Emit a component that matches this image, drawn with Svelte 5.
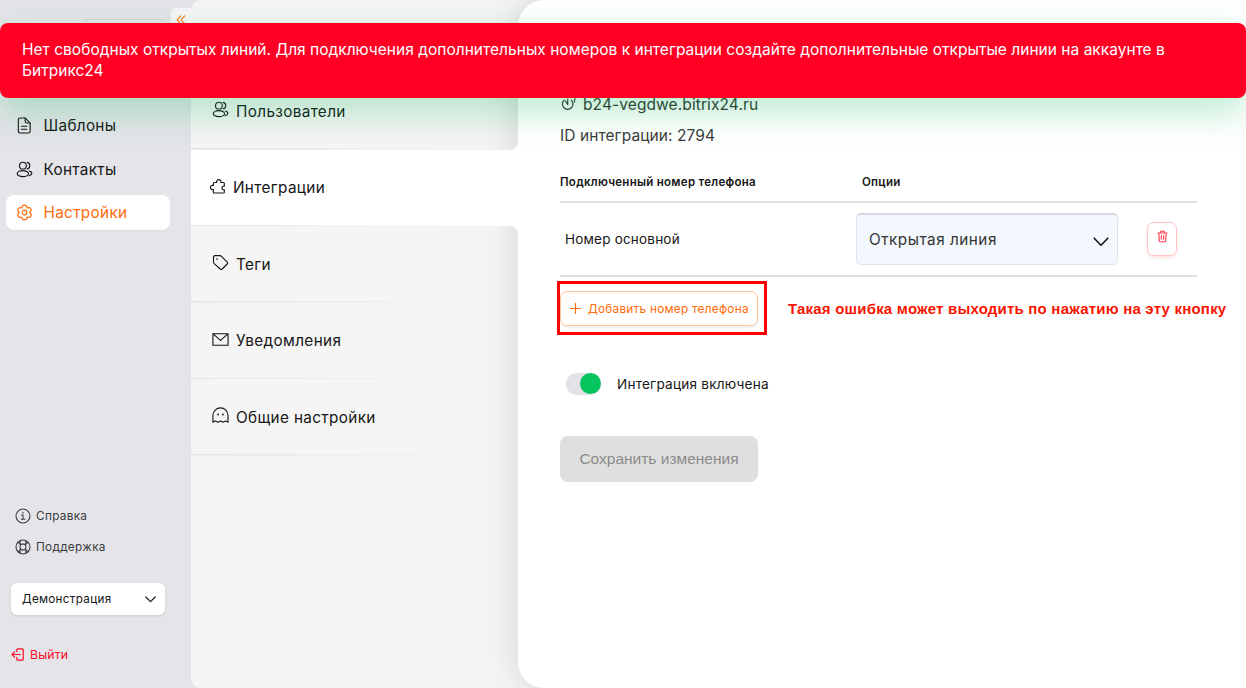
<script>
  const icons = {
    file: '<path d="M4.500 1h5.200L15 6.400v8.600a2 2 0 0 1-2 2H4.500a2 2 0 0 1-2-2V3a2 2 0 0 1 2-2z"/><path d="M9.700 1.200v3.200a2 2 0 0 0 2 2h3.100M5.700 9.800h5.800M5.700 13h5.800"/>',
    users: '<circle cx="7.300" cy="4.900" r="3.600"/><ellipse cx="7.300" cy="13.400" rx="6" ry="3.200"/><path d="M11.900 1.500a3.500 3.500 0 0 1 0 6.800M14 10.600c1.700.4 2.800 1.300 2.800 2.500s-1.100 2.100-2.800 2.600"/>',
    gear: '<path d="M6.200 4.150C6.800.2 11.200.2 11.800 4.150C15.520 2.700 17.720 6.500 14.600 9C17.720 11.500 15.520 15.300 11.800 13.850C11.200 17.800 6.800 17.800 6.200 13.850C2.480 15.300.28 11.500 3.400 9C.28 6.500 2.480 2.700 6.200 4.150z"/><circle cx="9" cy="9" r="2.500"/>',
    puzzle: '<path d="M4.700 15.900h10.600a.9.9 0 0 0 .9-.9v-2.600a1.900 1.900 0 1 1 0-3.600V5.700a.9.9 0 0 0-.9-.9h-2.800a2.300 2.300 0 1 0-4.300 0H5.500a.9.9 0 0 0-.9.9v2.200a2.300 2.300 0 1 0 0 4.300V15"/>',
    tag: '<path d="M1.600 3.200a1.500 1.500 0 0 1 1.500-1.500h5.500a1.700 1.700 0 0 1 1.200.5l6.300 6.300a1.500 1.500 0 0 1 0 2.100l-5.300 5.300a1.500 1.500 0 0 1-2.100 0L2.100 9.900a1.700 1.700 0 0 1-.5-1.200z"/><circle cx="5.200" cy="5.300" r=".3"/>',
    mail: '<path d="M1 2.900h16v12.200H1zM1.200 3.100L9 10l7.800-6.900"/>',
    ghost: '<path d="M1 16.200V8.900a8 8 0 0 1 16 0v7.300l-2.600-1.500-2.700 1.500L9 14.700l-2.700 1.500-2.700-1.500z"/><circle cx="6.500" cy="8" r=".4"/><circle cx="11.500" cy="8" r=".4"/>',
    info: '<circle cx="9" cy="9" r="7.900"/><path d="M7.300 7.800H9v4.800M7 12.700h4.200M9 4.800v1"/>',
    help: '<circle cx="9" cy="9" r="7.900"/><rect x="5.800" y="5.800" width="6.400" height="6.400" rx="2"/><path d="M3.400 3.400l3.100 3.100M14.600 3.400l-3.100 3.100M3.400 14.600l3.100-3.100M14.600 14.600l-3.100-3.100M5.800 2.200v3.900M12.200 2.200v3.900M5.800 11.900v3.900M12.200 11.900v3.900"/>'
  };

  const menu = [
    { icon: 'file', label: 'Шаблоны' },
    { icon: 'users', label: 'Контакты' },
    { icon: 'gear', label: 'Настройки' }
  ];

  const sections = [
    { icon: 'users', label: 'Пользователи' },
    { icon: 'puzzle', label: 'Интеграции' },
    { icon: 'tag', label: 'Теги' },
    { icon: 'mail', label: 'Уведомления' },
    { icon: 'ghost', label: 'Общие настройки' }
  ];

  let page = $state('Настройки');
  let section = $state('Интеграции');
  let enabled = $state(true);
</script>

{#snippet icon(name, size)}
  <svg class="icon" width={size} height={size} viewBox="0 0 18 18">{@html icons[name]}</svg>
{/snippet}

<div class="app">
  <aside class="sidebar">
    <div class="account"></div>
    <button class="collapse" aria-label="collapse">
      <svg width="10" height="10" viewBox="0 0 10 10"><path d="M4.700.8L1 4.900 4.700 9M8.700.8L5 4.900 8.700 9" /></svg>
    </button>

    <nav class="menu">
      {#each menu as item}
        <button class="menu-item" class:active={page === item.label} onclick={() => (page = item.label)}>
          {@render icon(item.icon, 17)}
          <span>{item.label}</span>
        </button>
      {/each}
    </nav>

    <div class="bottom">
      <div class="link">{@render icon('info', 16)}<span>Справка</span></div>
      <div class="link">{@render icon('help', 16)}<span>Поддержка</span></div>
      <div class="workspace">
        <span>Демонстрация</span>
        <svg width="11" height="7" viewBox="0 0 11 7"><path d="M.8 1l4.700 4.600L10.200 1" /></svg>
      </div>
      <div class="logout">
        <svg width="14" height="13" viewBox="0 0 14 13"><path d="M5.800 3.600V1.800a1 1 0 0 1 1-1h4.400a1 1 0 0 1 1 1v9.400a1 1 0 0 1-1 1H6.800a1 1 0 0 1-1-1V9.400M9.300 6.500H1M3.600 3.900L1 6.500l2.600 2.600" /></svg>
        <span>Выйти</span>
      </div>
    </div>
  </aside>

  <div class="sections">
    {#each sections as item}
      <button class="section" class:current={section === item.label} onclick={() => (section = item.label)}>
        {@render icon(item.icon, 17)}
        <span>{item.label}</span>
      </button>
    {/each}
  </div>

  <main class="content">
    <div class="portal">
      <svg width="17" height="16" viewBox="0 0 17 16"><path d="M4 4.200a5.300 5.300 0 1 0 7.400 0M7.700 3v5.500M7.700 8.500L5.300 5M15 2.500l-.6 3.500" /></svg>
      <span>b24-vegdwe.bitrix24.ru</span>
    </div>
    <div class="integration-id">ID интеграции: 2794</div>

    <div class="table">
      <div class="row head">
        <span class="phone-head">Подключенный номер телефона</span>
        <span>Опции</span>
      </div>
      <div class="row">
        <span class="phone">Номер основной</span>
        <div class="select">
          <span>Открытая линия</span>
          <svg width="16" height="10" viewBox="0 0 16 10"><path d="M1.200 1.200L8 8.200l6.800-7" /></svg>
        </div>
        <button class="delete" aria-label="delete">
          <svg width="12" height="14" viewBox="0 0 12 14"><path d="M1 3.200h10M4 3V1.200h4V3M2 3.400l.6 8.400a1 1 0 0 0 1 .9h4.800a1 1 0 0 0 1-.9l.6-8.400M4.700 6v4M7.300 6v4" /></svg>
        </button>
      </div>
    </div>

    <div class="add-row">
      <button class="add">
        <svg width="11" height="11" viewBox="0 0 12 12"><path d="M6 .5v11M.5 6h11" /></svg>
        <span>Добавить номер телефона</span>
      </button>
      <span class="note">Такая ошибка может выходить по нажатию на эту кнопку</span>
    </div>

    <div class="toggle-row">
      <button class="toggle" class:on={enabled} aria-label="toggle" onclick={() => (enabled = !enabled)}></button>
      <span>Интеграция включена</span>
    </div>

    <button class="save" disabled>Сохранить изменения</button>
  </main>

  <div class="toast">
    Нет свободных открытых линий. Для подключения дополнительных номеров к интеграции создайте дополнительные открытые линии на аккаунте в Битрикс24
  </div>
</div>

<style>
  :global(body) {
    margin: 0;
  }

  * {
    box-sizing: border-box;
  }

  button {
    font: inherit;
    color: inherit;
    border: 0;
    background: none;
    padding: 0;
    text-align: left;
  }

  span {
    white-space: nowrap;
  }

  svg {
    flex: none;
    fill: none;
    stroke: currentColor;
    stroke-width: 1.2;
    stroke-linecap: round;
    stroke-linejoin: round;
  }

  .app {
    position: relative;
    display: flex;
    width: 1246px;
    height: 688px;
    overflow: hidden;
    background: #e4e4e9;
    color: #161616;
    font-family: Inter, sans-serif;
  }

  .sidebar {
    position: relative;
    display: flex;
    flex: none;
    flex-direction: column;
    width: 191px;
    padding: 108px 21px 0 6px;
  }

  .account {
    position: absolute;
    left: 83px;
    top: 19px;
    width: 84px;
    height: 30px;
    border: 1px solid #d3d3d8;
    border-radius: 5px;
  }

  .collapse {
    position: absolute;
    right: 0;
    top: 8px;
    width: 20px;
    height: 24px;
    padding: 6px 5px;
    border-radius: 5px 0 0 5px;
    background: #f5f5f5;
    color: #ff7a1f;
  }

  .collapse svg {
    display: block;
  }

  .menu {
    display: flex;
    flex-direction: column;
    gap: 8.5px;
  }

  .menu-item {
    display: flex;
    align-items: center;
    gap: 11px;
    height: 35px;
    padding-left: 9.5px;
    border-radius: 8px;
    font-size: 15.3px;
    letter-spacing: 0.32px;
  }

  .menu-item.active {
    background: #fff;
    color: #ff6b0a;
    box-shadow: 0 1px 2px rgba(0, 0, 0, 0.04);
  }

  .bottom {
    display: flex;
    flex-direction: column;
    margin-top: 270px;
    padding: 0 5px;
  }

  .link {
    display: flex;
    align-items: center;
    gap: 5px;
    height: 31px;
    padding-left: 4px;
    color: #3c3c3e;
    font-size: 11.8px;
    letter-spacing: 0.3px;
  }

  .workspace {
    display: flex;
    align-items: center;
    justify-content: space-between;
    height: 32px;
    margin-top: 21px;
    padding: 0 9px 0 11px;
    border-radius: 6px;
    background: #fff;
    box-shadow: 0 1px 3px rgba(0, 0, 0, 0.12);
    font-size: 11.7px;
    letter-spacing: 0.3px;
  }

  .logout {
    display: flex;
    align-items: center;
    gap: 5px;
    margin-top: 32px;
    color: #ff0a24;
    font-size: 12.2px;
    letter-spacing: 0.2px;
  }

  /* runs under the rounded left corners of the content */
  .sections {
    flex: none;
    width: 357px;
    margin-right: -30px;
    padding-top: 73px;
    border-radius: 10px 0 0 10px;
    background: #f5f5f5;
  }

  .section {
    position: relative;
    display: flex;
    align-items: center;
    gap: 7px;
    width: 327px;
    height: 76.5px;
    padding-left: 21px;
    font-size: 15.3px;
    letter-spacing: 0.35px;
  }

  .section .icon {
    margin-top: -3px;
  }

  .section:not(.current) {
    background: linear-gradient(to right, #e4e4e4, rgba(228, 228, 228, 0)) bottom left / 290px 1.5px no-repeat;
  }

  .section.current {
    z-index: 2;
    padding-left: 18px;
    background:
      linear-gradient(to right, #e4e4e4, #fff) bottom left / 290px 1px no-repeat,
      #fff;
  }

  .section.current::before,
  .section.current::after {
    content: '';
    position: absolute;
    right: 0;
    width: 8px;
    height: 8px;
  }

  .section.current::before {
    bottom: 100%;
    background: radial-gradient(circle at 0 0, transparent 7.5px, #fff 8px);
  }

  .section.current::after {
    top: 100%;
    background: radial-gradient(circle at 0 100%, transparent 7.5px, #fff 8px);
  }

  .content {
    position: relative;
    z-index: 1;
    flex: 1;
    padding: 94px 49px 0 42px;
    border-radius: 26px 0 0 26px;
    background: #fff;
    box-shadow: 0 0 38px rgba(0, 0, 0, 0.14);
  }

  .portal {
    display: flex;
    align-items: center;
    gap: 6px;
    height: 20px;
    color: #333;
    font-size: 15.5px;
    letter-spacing: 0.1px;
  }

  .integration-id {
    margin-top: 12px;
    color: #3c3c3c;
    font-size: 15.5px;
    letter-spacing: 0.08px;
    line-height: 20px;
  }

  .table {
    margin-top: 17px;
  }

  .row {
    display: flex;
    align-items: center;
    height: 74px;
    border-bottom: 2px solid #e1e1e4;
  }

  .head {
    height: 40px;
    font-size: 11.5px;
    font-weight: 600;
    letter-spacing: 0.28px;
  }

  .phone-head {
    width: 302px;
  }

  .phone {
    width: 296px;
    padding-left: 5px;
    font-size: 13.5px;
    letter-spacing: 0.2px;
  }

  .select {
    display: flex;
    align-items: center;
    justify-content: space-between;
    width: 262px;
    height: 52px;
    padding: 0 8px 1px 12px;
    border: 1px solid #dfe5ec;
    border-top: 2px solid #d2d8de;
    border-radius: 5px;
    background: #f3f8ff;
    color: #333;
    font-size: 15.3px;
    letter-spacing: 0.5px;
  }

  .select svg {
    margin-top: 5px;
    stroke: #111;
    stroke-width: 1.6;
  }

  .delete {
    display: flex;
    justify-content: center;
    width: 30px;
    height: 34px;
    margin-left: 29px;
    padding-top: 7px;
    border: 1.5px solid #ffc0c4;
    border-radius: 7px;
    box-shadow: 0 2px 3px rgba(255, 60, 70, 0.15);
    color: #ff3b4a;
  }

  .delete svg {
    width: 11px;
    height: 13px;
  }

  .add-row {
    display: flex;
    align-items: center;
    gap: 30px;
    margin-top: 14px;
  }

  .add {
    position: relative;
    display: flex;
    align-items: center;
    gap: 7px;
    flex: none;
    width: 198px;
    height: 35px;
    padding-left: 9px;
    border: 1px solid #ffc59c;
    border-radius: 7px;
    box-shadow: 0 1px 3px rgba(0, 0, 0, 0.1);
    color: #ff6b0a;
    font-size: 11.8px;
    letter-spacing: 0.26px;
  }

  .add::after {
    content: '';
    position: absolute;
    inset: -11px -10px -10px -4px;
    border: 3px solid #f00;
  }

  .note {
    width: 0;
    color: #fa1400;
    font-family: 'Liberation Sans', Arial, sans-serif;
    font-size: 15px;
    font-weight: 700;
    letter-spacing: 0.21px;
  }

  .toggle-row {
    display: flex;
    align-items: center;
    gap: 16px;
    margin-top: 47px;
    padding-left: 6px;
    font-size: 13.6px;
    letter-spacing: 0.2px;
  }

  .toggle {
    display: flex;
    width: 35px;
    height: 22px;
    border-radius: 11px;
    background: #e2e2e7;
  }

  .toggle::before {
    content: '';
    width: 21px;
    height: 21px;
    border-radius: 50%;
    background: #999;
  }

  .toggle.on::before {
    margin-left: auto;
    background: #05c55e;
  }

  .save {
    width: 198px;
    height: 46px;
    margin-top: 41px;
    border-radius: 8px;
    background: #dfdfdf;
    color: #8b8b8b;
    font-family: 'Liberation Sans', Arial, sans-serif;
    font-size: 15.5px;
    text-align: center;
  }

  .toast {
    position: absolute;
    z-index: 5;
    left: 0;
    top: 23px;
    width: 1246px;
    height: 75px;
    padding: 16px 60px 0 22px;
    border-radius: 8px;
    background: #ff0024;
    box-shadow: 0 14px 36px rgba(0, 180, 80, 0.27);
    color: #fff;
    font-size: 15.5px;
    letter-spacing: 0.02px;
    line-height: 21px;
  }
</style>
